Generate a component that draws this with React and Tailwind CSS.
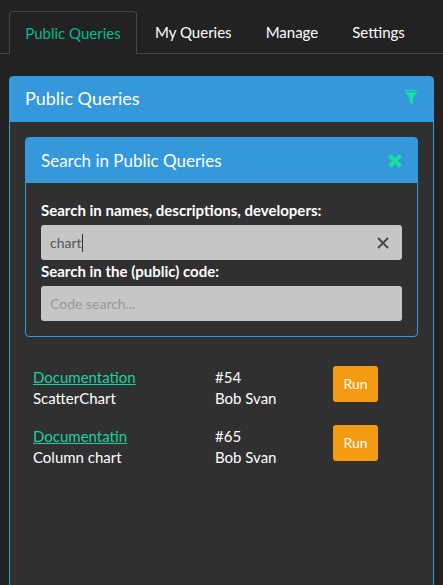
const font = { fontFamily: 'Lato, "Noto Sans", sans-serif' };

const results = [
  { doc: 'Documentation', name: 'ScatterChart', id: '#54', dev: 'Bob Svan' },
  { doc: 'Documentatin', name: 'Column chart', id: '#65', dev: 'Bob Svan' },
];

function Tab({ label, active }) {
  if (active) {
    return (
      <a className="-mb-px block h-[43px] w-[128px] rounded-t border border-[#444] border-b-[#222] bg-[#222] pt-[10px] text-center text-[15px] leading-[22px] text-[#00bc8c]">
        {label}
      </a>
    );
  }
  return <a className="block pl-[18px] pr-[16px] pt-[10px] text-[15px] leading-[22px] text-white">{label}</a>;
}

export default function App() {
  return (
    <div className="h-[585px] w-[443px] overflow-hidden bg-[#222] text-white" style={font}>
      {/* Tabs */}
      <div className="pt-[11px]">
        <div className="flex h-[43px] border-b border-[#444] pl-[9px]">
          <Tab label="Public Queries" active />
          <Tab label="My Queries" />
          <Tab label="Manage" />
          <Tab label="Settings" />
        </div>
      </div>

      {/* Outer panel */}
      <div className="mx-[9px] mt-[22px] h-[520px] rounded-t border border-[#3498db] bg-[#303030]">
        <div className="flex h-[45px] items-center justify-between bg-[#3498db] px-[15px]">
          <h3 className="pb-[3px] text-[18px] leading-5">Public Queries</h3>
          <svg viewBox="0 0 14 16" className="mb-[4px] h-[15px] w-[14px] fill-[#14e0a0]">
            <rect x="0" y="0" width="14" height="1.2" />
            <path d="M0.5 2.4h13L9 8v7.5L5.5 13V8z" />
          </svg>
        </div>

        <div className="px-[15px] pt-[15px]">
          {/* Search panel */}
          <div className="h-[200px] rounded border border-[#3498db]">
            <div className="flex h-[45px] items-center justify-between bg-[#3498db] px-[15px]">
              <h4 className="text-[17px] leading-5">Search in Public Queries</h4>
              <svg viewBox="0 0 14 14" className="h-[14px] w-[14px] fill-[#14e0a0]">
                <path d="M0 3l3-3 4 4 4-4 3 3-4 4 4 4-3 3-4-4-4 4-3-3 4-4z" />
              </svg>
            </div>
            <div className="px-[15px] pt-[15px]">
              <label className="block text-[15px] font-bold leading-[24px]">
                Search in names, descriptions, developers:
              </label>
              <div className="mt-[3px] flex h-[35px] items-center justify-between rounded-[3px] bg-[#c6c6c6] pl-[9px] pr-[13px]">
                <span className="border-r border-[#333] text-[14px] leading-[18px] text-[#555]">chart</span>
                <svg viewBox="0 0 12 12" className="h-[12px] w-[12px] fill-none stroke-[#444] stroke-[1.8]">
                  <path d="M1 1l10 10M11 1L1 11" />
                </svg>
              </div>
              <label className="-mt-px block text-[15px] font-bold leading-[24px]">Search in the (public) code:</label>
              <div className="mt-[3px] flex h-[35px] items-center rounded-[3px] bg-[#c6c6c6] pl-[9px] text-[14px] text-[#999]">
                Code search...
              </div>
            </div>
          </div>

          {/* Results */}
          <div className="mt-[30px] flex flex-col gap-[23px] pl-[8px]">
            {results.map((r) => (
              <div key={r.id} className="flex h-[36px] text-[15px] leading-[21px]">
                <div className="w-[182px]">
                  <a className="block text-[#1bd09f] underline">{r.doc}</a>
                  <div>{r.name}</div>
                </div>
                <div className="w-[118px]">
                  <div>{r.id}</div>
                  <div>{r.dev}</div>
                </div>
                <button className="-mt-px h-[36px] w-[45px] rounded-[3px] bg-[#f39c12] pb-[1px] text-[14px] text-white">Run</button>
              </div>
            ))}
          </div>
        </div>
      </div>
    </div>
  );
}
